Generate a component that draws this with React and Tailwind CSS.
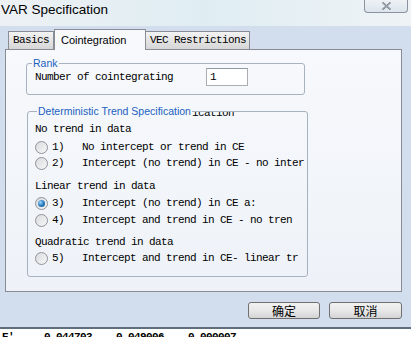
import React from "react";

const mono = "font-['Liberation_Mono','Courier_New',monospace] text-[11px] tracking-[-0.6px] text-black";
const sans = "font-['Liberation_Sans',Arial,sans-serif]";

function Radio({ checked }) {
    return (
        <div className="w-[13px] h-[13px] rounded-full border border-[#8f9399] bg-linear-to-br from-[#d9dbdd] to-[#f7f7f7] flex items-center justify-center shrink-0">
            {checked && (
                <div className="w-[7px] h-[7px] rounded-full bg-radial-[at_35%_35%] from-[#9fd3f5] via-[#2a7fc4] to-[#0c3f75]" />
            )}
        </div>
    );
}

function Option({ num, label, checked }) {
    return (
        <div className="h-[16px] flex items-center">
            <Radio checked={checked} />
            <span className={`${mono} ml-[4px] w-[30px]`}>{num}</span>
            <span className={`${mono} whitespace-nowrap`}>{label}</span>
        </div>
    );
}

function Heading({ children, className = "" }) {
    return <div className={`${mono} h-[16px] flex items-center ${className}`}>{children}</div>;
}

function Button({ children, className = "" }) {
    return (
        <button
            type="button"
            className={`h-[17px] rounded-[3px] border border-[#707070] bg-linear-to-b from-[#f2f2f2] via-[#e8e8e8] to-[#d4d4d4] text-[12px] leading-none text-black font-['Noto_Sans_CJK_SC',sans-serif] flex items-center justify-center ${className}`}
        >
            {children}
        </button>
    );
}

export default function App() {
    return (
        <div className="w-[411px] h-[337px] overflow-hidden bg-white flex flex-col">
            <div className="h-[26px] shrink-0 flex justify-between items-start bg-linear-to-r from-[#edf1f5] via-[#dfedf2] to-[#eff3f6]">
                <span className={`${sans} text-[13.5px] text-black pl-[1px]`}>VAR Specification</span>
                <div className="mr-[3px] w-[44px] h-[13px] rounded-b-[4px] border border-t-0 border-[#8a939e] bg-linear-to-b from-[#eef2f6] to-[#dde4ec] flex items-center justify-center">
                    <svg width="11" height="8" viewBox="0 0 11 8">
                        <path d="M1.5 0.5 L9.5 7.5 M9.5 0.5 L1.5 7.5" stroke="#5b6470" strokeWidth="1.6" fill="none" />
                        <path d="M1.5 0.5 L9.5 7.5 M9.5 0.5 L1.5 7.5" stroke="#f5f7f9" strokeWidth="0.5" fill="none" />
                    </svg>
                </div>
            </div>

            <div className="h-[303px] shrink-0 bg-[#d2deed] border-b-2 border-[#5e6e7c] pl-[5px] pr-[9px] pt-[3px] flex flex-col">
                <div className="h-[20px] flex items-end pl-[3px]">
                    <div className="w-[46px] h-[18px] border border-b-0 border-[#898c95] bg-linear-to-b from-[#f3f3f3] to-[#d6d6d6] flex items-center justify-center">
                        <span className={mono}>Basics</span>
                    </div>
                    <div className="w-[92px] h-[21px] -mb-px relative z-10 border border-b-0 border-[#898c95] bg-[#f7f9fc] flex items-start pl-[6px] pt-[2px]">
                        <span className={`${sans} text-[11px] text-black`}>Cointegration</span>
                    </div>
                    <div className="w-[104px] h-[18px] border border-b-0 border-l-0 border-[#898c95] bg-linear-to-b from-[#f3f3f3] to-[#d6d6d6] flex items-center pl-[4px]">
                        <span className={mono}>VEC Restrictions</span>
                    </div>
                </div>

                <div className="h-[243px] border border-[#898c95] bg-linear-to-b from-[#f7f9fc] to-[#eef2f8] flex flex-col">
                    <div className="relative mt-[13px] ml-[20px] w-[279px] h-[32px] rounded-[3px] border border-[#a7b2c0]">
                        <span className={`${sans} absolute -top-[8px] left-[5px] px-[1px] bg-[#f6f8fb] text-[10.5px] text-[#1d5fc0]`}>Rank</span>
                        <div className="mt-[4px] pl-[8px] h-[18px] flex items-center">
                            <span className={`${mono} w-[171px] whitespace-nowrap`}>Number of cointegrating</span>
                            <div className="w-[42px] h-[18px] border border-[#abadb3] border-t-[#8e9aa8] bg-white flex items-center pl-[3px]">
                                <span className={mono}>1</span>
                            </div>
                        </div>
                    </div>

                    <div className="relative mt-[16px] ml-[21px] w-[281px] h-[166px] rounded-[3px] border border-[#a7b2c0] pl-[7px]">
                        <div className="absolute -top-[8px] left-[9px] flex items-center">
                            <span className={`${sans} px-[1px] bg-[#f4f7fb] text-[10.5px] text-[#1d5fc0] whitespace-nowrap`}>Deterministic Trend Specification</span>
                            <div className="h-[5px] mt-[6px] overflow-hidden flex items-end bg-[#f4f7fb]">
                                <span className={`${mono} leading-[7px] whitespace-nowrap`}>ication</span>
                            </div>
                        </div>
                        <Heading className="mt-[9px]">No trend in data</Heading>
                        <div className="mt-[2px]">
                            <Option num="1)" label="No intercept or trend in CE" />
                            <Option num="2)" label="Intercept (no trend) in CE - no inter" />
                        </div>
                        <Heading className="mt-[7px]">Linear trend in data</Heading>
                        <div className="mt-[1px] flex flex-col gap-[1px]">
                            <Option num="3)" label="Intercept (no trend) in CE a:" checked />
                            <Option num="4)" label="Intercept and trend in CE - no tren" />
                        </div>
                        <Heading className="mt-[6px]">Quadratic trend in data</Heading>
                        <Option num="5)" label="Intercept and trend in CE- linear tr" />
                    </div>
                </div>

                <div className="mt-[10px] flex justify-end gap-[9px]">
                    <Button className="w-[72px]">确定</Button>
                    <Button className="w-[73px]">取消</Button>
                </div>
            </div>

            <div className="h-[8px] overflow-hidden flex items-start pl-[2px]">
                <span className={`${mono} leading-[12px] mt-[2px] font-bold whitespace-pre`}>E'     0.044703    0.049006    0.000007</span>
            </div>
        </div>
    );
}
